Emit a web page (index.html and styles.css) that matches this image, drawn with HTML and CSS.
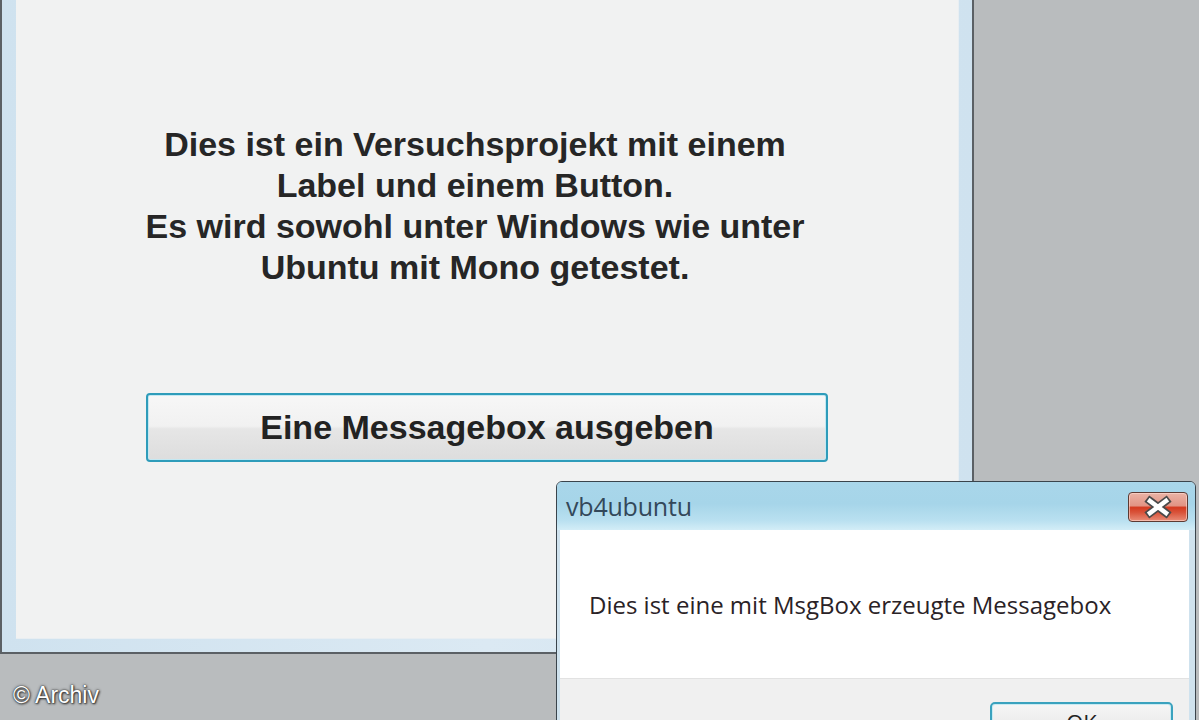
FILE: index.html
```html
<!DOCTYPE html>
<html lang="de">
<head>
<meta charset="utf-8">
<title>vb4ubuntu</title>
<link rel="stylesheet" href="styles.css">
</head>
<body>
<div class="desktop">
  <div class="main-window">
    <div class="client">
      <div class="label">Dies ist ein Versuchsprojekt mit einem<br>Label und einem Button.<br>Es wird sowohl unter Windows wie unter<br>Ubuntu mit Mono getestet.</div>
      <button class="big-btn" type="button">Eine Messagebox ausgeben</button>
    </div>
  </div>

  <div class="msgbox">
    <div class="titlebar">
      <span class="title">vb4ubuntu</span>
      <span class="close">
        <svg width="58" height="28" viewBox="0 0 58 28">
          <path d="M21 8 L37 20 M37 8 L21 20" stroke="#4a4a4a" stroke-width="8" stroke-linecap="square" fill="none"/>
          <path d="M21 8 L37 20 M37 8 L21 20" stroke="#ffffff" stroke-width="4.5" stroke-linecap="square" fill="none"/>
        </svg>
      </span>
    </div>
    <div class="msg-body">
      <p class="msg-text">Dies ist eine mit MsgBox erzeugte Messagebox</p>
    </div>
    <div class="msg-footer">
      <button class="ok-btn" type="button">OK</button>
    </div>
  </div>

  <div class="credit">© Archiv</div>
</div>
</body>
</html>
```

FILE: styles.css
```css
html, body {
  margin: 0;
  padding: 0;
}
body {
  width: 1199px;
  height: 720px;
  overflow: hidden;
  background: #b9bcbe;
  font-family: "Liberation Sans", Arial, sans-serif;
}
.desktop {
  position: relative;
  width: 1199px;
  height: 720px;
}

/* main window */
.main-window {
  box-sizing: border-box;
  width: 974px;
  height: 654px;
  border-left: 2px solid #5b6065;
  border-right: 2px solid #5b6065;
  border-bottom: 2px solid #5b6065;
  padding: 0 13px 13px 14px;
  background: linear-gradient(90deg, #cfe2ef 0%, #dbe9f3 50%, #cfe2ef 100%);
}
.client {
  box-sizing: border-box;
  height: 100%;
  background: #f1f2f2;
  padding-top: 124px;
  border-right: 1px solid #e8eef2;
  border-bottom: 1px solid #e8eef2;
}
.label {
  width: 720px;
  margin-left: 99px;
  text-align: center;
  font-weight: bold;
  font-size: 34px;
  line-height: 41px;
  color: #262626;
}
.big-btn {
  display: block;
  box-sizing: border-box;
  width: 682px;
  height: 69px;
  margin: 105px 0 0 130px;
  border: 2px solid #2e9cba;
  border-radius: 4px;
  box-shadow: inset 0 0 0 1px #c4e8f2;
  background: linear-gradient(180deg, #f7f7f7 0%, #f1f1f1 48%, #e6e6e6 52%, #dddddd 100%);
  font-family: "Liberation Sans", Arial, sans-serif;
  font-weight: bold;
  font-size: 34px;
  color: #222;
  padding: 0;
}

/* message box */
.msgbox {
  position: absolute;
  left: 556px;
  top: 481px;
  box-sizing: border-box;
  width: 640px;
  height: 280px;
  border: 1px solid #3a444c;
  border-radius: 6px 6px 0 0;
  background: #cfe2ee;
  padding: 0 6px 0 3px;
  display: flex;
  flex-direction: column;
}
.titlebar {
  height: 48px;
  margin: 0 -6px 0 -3px;
  padding: 0 7px 0 9px;
  border-radius: 5px 5px 0 0;
  display: flex;
  align-items: center;
  justify-content: space-between;
  background: linear-gradient(180deg, #a9d6ea 0%, #a6d5e9 45%, #b9e0f0 80%, #d3edf7 100%);
}
.title {
  font-family: "Open Sans", "Noto Sans", sans-serif;
  font-size: 25px;
  color: #33485a;
  letter-spacing: -0.2px;
}
.close {
  box-sizing: border-box;
  width: 60px;
  height: 30px;
  margin-top: 2px;
  border: 1px solid #5c3a33;
  border-radius: 4px;
  box-shadow: inset 0 0 0 1px rgba(255, 220, 210, 0.6);
  background: linear-gradient(180deg, #eab3a6 0%, #e29484 45%, #d43a20 52%, #d9543b 70%, #e98d78 100%);
  display: flex;
  align-items: center;
  justify-content: center;
}
.close svg {
  display: block;
}
.msg-body {
  height: 148px;
  background: #ffffff;
  display: flex;
  align-items: center;
  padding-left: 29px;
}
.msg-text {
  margin: 0;
  font-family: "Open Sans", "Noto Sans", sans-serif;
  font-size: 24px;
  color: #2a2226;
  letter-spacing: 0;
}
.msg-footer {
  flex: 1;
  background: #f0f0f0;
  border-top: 1px solid #e2e2e2;
  padding: 23px 0 0 430px;
}
.ok-btn {
  box-sizing: border-box;
  width: 183px;
  height: 40px;
  border: 2px solid #3aa2be;
  border-radius: 5px;
  box-shadow: inset 0 0 0 1px #c9ebf3;
  background: linear-gradient(180deg, #f6f6f6 0%, #ededed 50%, #dedede 100%);
  font-family: "Open Sans", "Noto Sans", sans-serif;
  font-size: 22px;
  color: #222;
  padding: 0;
}

/* watermark */
.credit {
  position: absolute;
  left: 13px;
  top: 682px;
  font-family: "Liberation Sans", Arial, sans-serif;
  font-size: 23px;
  color: #ffffff;
  text-shadow: 0 0 3px #333, 1px 1px 2px #333, 0 0 1px #222;
}
```
